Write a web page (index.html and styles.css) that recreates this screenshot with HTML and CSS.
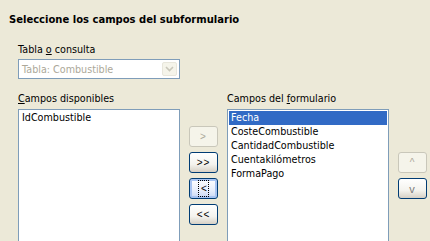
FILE: index.html
```html
<!DOCTYPE html>
<html lang="es">
<head>
  <meta charset="UTF-8" />
  <title>Subformulario</title>
  <link rel="stylesheet" href="styles.css">
</head>
<body>

  <div class="page">
    <h2 class="title">Seleccione los campos del subformulario</h2>

    <div class="source">
      <label class="lbl">Tabla <u>o</u> consulta</label>
      <div class="combo">
        <span class="combo-text">Tabla: Combustible</span>
        <span class="combo-btn">
          <svg width="9" height="6" viewBox="0 0 9 6"><path d="M1 1 L4.5 4.5 L8 1" fill="none" stroke="#c9c7ba" stroke-width="1.6"/></svg>
        </span>
      </div>
    </div>

    <div class="fields">
      <div class="col">
        <label class="lbl"><u>C</u>ampos disponibles</label>
        <ul class="listbox">
          <li>IdCombustible</li>
        </ul>
      </div>

      <div class="btn-col move">
        <button class="btn" disabled>&gt;</button>
        <button class="btn">&gt;&gt;</button>
        <button class="btn focus"><span class="focus-rect">&lt;</span></button>
        <button class="btn">&lt;&lt;</button>
      </div>

      <div class="col">
        <label class="lbl">Campos del <u>f</u>ormulario</label>
        <ul class="listbox">
          <li class="selected">Fecha</li>
          <li>CosteCombustible</li>
          <li>CantidadCombustible</li>
          <li>Cuentakilómetros</li>
          <li>FormaPago</li>
        </ul>
      </div>

      <div class="btn-col order">
        <button class="btn" disabled>^</button>
        <button class="btn down">v</button>
      </div>
    </div>
  </div>

</body>
</html>
```

FILE: styles.css
```css
body {
  margin: 0;
  background: #ece9d8;
  font-family: Tahoma, 'DejaVu Sans', sans-serif;
  font-size: 9.6px;
  color: #000;
  overflow: hidden;
}

.page {
  height: 241px;
}

.title {
  margin: 0;
  padding: 13px 0 0 9px;
  font-size: 10px;
  line-height: 13px;
  font-weight: bold;
}

.lbl {
  display: block;
  line-height: 12px;
}

.source {
  padding-left: 18px;
  margin-top: 18px;
}

.combo {
  margin-top: 3px;
  width: 162px;
  height: 20px;
  box-sizing: border-box;
  border: 1px solid #7f9db9;
  background: #fff;
  display: flex;
  align-items: center;
  justify-content: space-between;
  padding: 0 2px 0 3px;
}

.combo-text {
  color: #aca899;
}

.combo-btn {
  width: 15px;
  height: 14px;
  box-sizing: border-box;
  border: 1px solid #e8e6db;
  border-radius: 2px;
  background: #f5f4ea;
  display: flex;
  align-items: center;
  justify-content: center;
}

.fields {
  display: flex;
  padding-left: 18px;
  margin-top: 14px;
}

.col {
  display: flex;
  flex-direction: column;
  width: 162px;
}

.listbox {
  list-style: none;
  margin: 4px 0 0;
  padding: 1px;
  height: 134px;
  box-sizing: border-box;
  border: 1px solid #7f9db9;
  background: #fff;
}

.listbox li {
  line-height: 14px;
  padding-left: 2px;
  white-space: nowrap;
}

.listbox li.selected {
  background: #316ac5;
  color: #fff;
}

.btn-col {
  display: flex;
  flex-direction: column;
  gap: 5px;
  margin: 0 9px;
}

.move {
  padding-top: 33px;
}

.order {
  margin-right: 0;
  padding-top: 59px;
}

.btn {
  width: 29px;
  height: 21px;
  padding: 0;
  border: 1px solid #003c74;
  border-radius: 3px;
  background: linear-gradient(#ffffff, #f4f3ee 60%, #d6d0c5);
  font-family: 'Liberation Sans', sans-serif;
  font-size: 10px;
  letter-spacing: 1px;
  color: #000;
  display: flex;
  align-items: center;
  justify-content: center;
}

.btn:disabled {
  border-color: #c9c7ba;
  background: #f5f4ea;
  color: #aca899;
}

.btn.down {
  color: #7a7a7a;
  font-size: 11px;
}

.btn.focus {
  background: linear-gradient(#ffffff, #e7eefc 60%, #c7d7f5);
  box-shadow: inset 0 0 0 2px #a8c4f2;
}

.focus-rect {
  outline: 1px dotted #000;
  padding: 2px 1px 2px 2px;
  line-height: 11px;
  letter-spacing: 0;
}
```
